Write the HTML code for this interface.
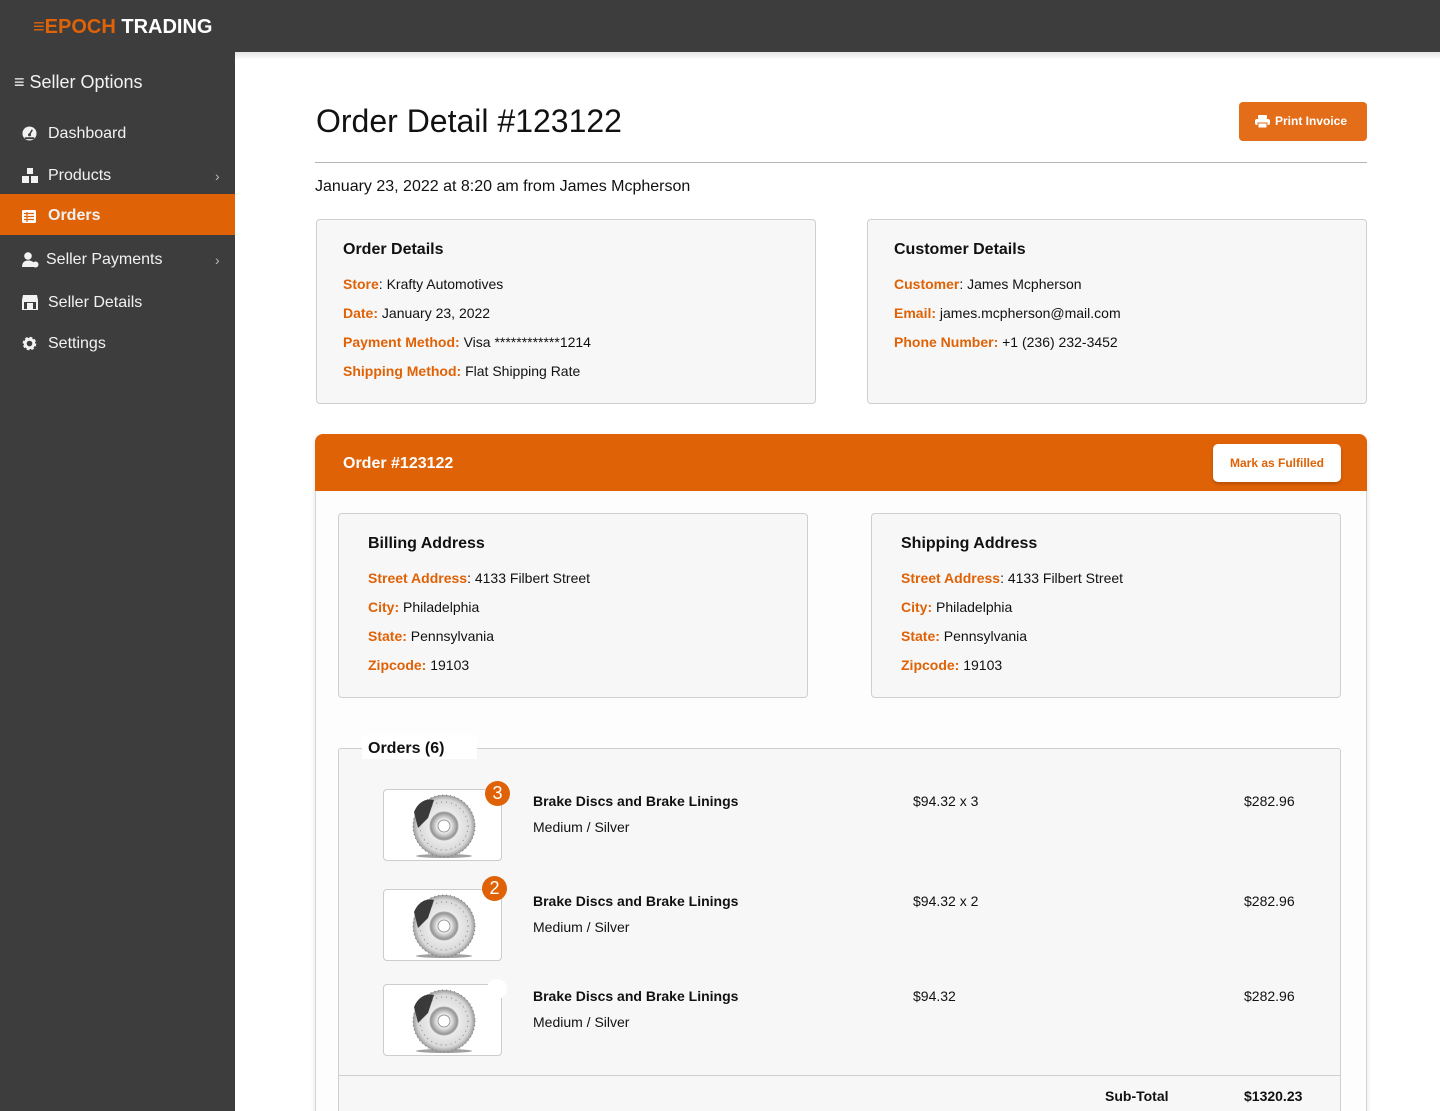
<!DOCTYPE html>
<html><head><meta charset="utf-8"><style>
*{box-sizing:border-box;margin:0;padding:0}
html,body{width:1440px;height:1111px;overflow:hidden}
body{font-family:"Liberation Sans",Arial,sans-serif;background:#fff;position:relative;color:#111}
.a{position:absolute}
.top{left:0;top:0;width:1440px;height:52px;background:#3d3d3d}
.side{left:0;top:52px;width:235px;height:1059px;background:#3d3d3d}
.shadow{left:235px;top:52px;width:1205px;height:8px;background:linear-gradient(#e4e4e4,#fff)}
.nav{left:0;width:235px;height:41px;color:#f2f2f2;font-size:16px;display:flex;align-items:center}
.nav svg{position:absolute;left:22px}
.nav span{position:absolute;left:48px}
.chev{position:absolute;left:215px;color:#bbb;font-size:14px;font-weight:normal}
.card{background:#f7f7f7;border:1px solid #cfcfcf;border-radius:4px}
h3{font-size:16px;font-weight:bold;position:absolute}
.ln{position:absolute;font-size:14px;white-space:nowrap}
.o{color:#e06206;font-weight:bold}
.img{width:119px;height:72px;background:#fff;border:1px solid #ccc;border-radius:4px}
.badge{width:25px;height:25px;border-radius:50%;background:#e06206;color:#fff;font-size:18px;text-align:center;line-height:25px}
</style></head><body>
<div class="a top"></div>
<div class="a" style="left:33px;top:16px;font-size:20px;font-weight:bold;letter-spacing:0;color:#fff"><span style="color:#e06206">≡EPOCH</span> TRADING</div>
<div class="a side"></div>
<div class="a shadow"></div>
<div class="a" style="left:14px;top:72px;font-size:18px;color:#f2f2f2">≡ Seller Options</div>

<div class="a nav" style="top:113px"><svg width="15" height="15" viewBox="0 0 16 16"><circle cx="8" cy="8" r="7.5" fill="#f2f2f2"/><path d="M8 9L11 4" stroke="#3d3d3d" stroke-width="1.6"/><circle cx="8" cy="9.5" r="1.6" fill="#3d3d3d"/><rect x="3" y="12" width="10" height="2" fill="#3d3d3d"/></svg><span>Dashboard</span></div>
<div class="a nav" style="top:155px"><svg width="16" height="15" viewBox="0 0 16 15"><rect x="5" y="0" width="6" height="6" fill="#f2f2f2"/><rect x="0" y="8" width="7" height="7" fill="#f2f2f2"/><rect x="9" y="8" width="7" height="7" fill="#f2f2f2"/></svg><span>Products</span><b class="chev">›</b></div>
<div class="a nav" style="top:194px;background:#e06206;font-weight:bold;padding-top:3px"><svg width="14" height="13" viewBox="0 0 14 13"><rect width="14" height="13" rx="1.5" fill="#fff"/><path d="M2 3.5h10M2 6.5h10M2 9.5h10M5 2v10" stroke="#e06206" stroke-width="1.2"/></svg><span>Orders</span></div>
<div class="a nav" style="top:239px"><svg width="17" height="16" viewBox="0 0 17 16"><circle cx="6" cy="4" r="3.8" fill="#f2f2f2"/><path d="M0 15c0-5 3-6.5 6-6.5s5 1 6 2.5v4z" fill="#f2f2f2"/><circle cx="13.5" cy="12.5" r="3" fill="#f2f2f2"/></svg><span style="left:46px">Seller Payments</span><b class="chev">›</b></div>
<div class="a nav" style="top:282px"><svg width="16" height="15" viewBox="0 0 16 15"><path d="M1 0h14l1 5H0z" fill="#f2f2f2"/><rect x="1" y="6" width="14" height="9" fill="none" stroke="#f2f2f2" stroke-width="2"/><rect x="5" y="8" width="6" height="7" fill="#f2f2f2"/></svg><span>Seller Details</span></div>
<div class="a nav" style="top:323px"><svg width="15" height="15" viewBox="0 0 16 16"><circle cx="8" cy="8" r="5.5" fill="none" stroke="#f2f2f2" stroke-width="3.5" stroke-dasharray="2.6 1.7"/><circle cx="8" cy="8" r="4.5" fill="none" stroke="#f2f2f2" stroke-width="3"/></svg><span>Settings</span></div>

<div class="a" style="left:316px;top:103px;font-size:32px">Order Detail #123122</div>
<div class="a" style="left:1239px;top:102px;width:128px;height:39px;background:#e36d19;border-radius:4px;color:#fff;font-size:12px;font-weight:bold;line-height:39px;padding-left:36px">Print Invoice</div>
<svg class="a" style="left:1255px;top:115px" width="15" height="13" viewBox="0 0 15 13"><rect x="3" y="0" width="9" height="4" rx="1" fill="#fff"/><rect x="0" y="4" width="15" height="6" rx="2" fill="#fff"/><rect x="3" y="8" width="9" height="5" fill="#fff" stroke="#e36d19"/></svg>
<div class="a" style="left:315px;top:162px;width:1052px;height:1px;background:#b5b5b5"></div>
<div class="a" style="left:315px;top:178px;font-size:16px">January 23, 2022 at 8:20 am from James Mcpherson</div>

<div class="a card" style="left:316px;top:219px;width:500px;height:185px"></div>
<h3 style="left:343px;top:241px">Order Details</h3>
<div class="ln" style="left:343px;top:276px"><span class="o">Store</span>: Krafty Automotives</div>
<div class="ln" style="left:343px;top:305px"><span class="o">Date:</span> January 23, 2022</div>
<div class="ln" style="left:343px;top:334px"><span class="o">Payment Method:</span> Visa ************1214</div>
<div class="ln" style="left:343px;top:363px"><span class="o">Shipping Method:</span> Flat Shipping Rate</div>

<div class="a card" style="left:867px;top:219px;width:500px;height:185px"></div>
<h3 style="left:894px;top:241px">Customer Details</h3>
<div class="ln" style="left:894px;top:276px"><span class="o">Customer</span>: James Mcpherson</div>
<div class="ln" style="left:894px;top:305px"><span class="o">Email:</span> james.mcpherson@mail.com</div>
<div class="ln" style="left:894px;top:334px"><span class="o">Phone Number:</span> +1 (236) 232-3452</div>

<div class="a" style="left:315px;top:434px;width:1052px;height:700px;border:1px solid #d5d5d5;border-radius:8px;background:#fdfdfd;box-shadow:0 2px 6px rgba(0,0,0,.12)"></div>
<div class="a" style="left:315px;top:434px;width:1052px;height:57px;background:#e06206;border-radius:8px 8px 0 0"></div>
<div class="a" style="left:343px;top:455px;color:#fff;font-size:16px;font-weight:bold">Order #123122</div>
<div class="a" style="left:1213px;top:444px;width:128px;height:38px;background:#fff;border-radius:5px;color:#e06206;font-size:12px;font-weight:bold;text-align:center;line-height:38px;box-shadow:0 2px 3px rgba(0,0,0,.2)">Mark as Fulfilled</div>

<div class="a card" style="left:338px;top:513px;width:470px;height:185px"></div>
<h3 style="left:368px;top:535px">Billing Address</h3>
<div class="ln" style="left:368px;top:570px"><span class="o">Street Address</span>: 4133 Filbert Street</div>
<div class="ln" style="left:368px;top:599px"><span class="o">City:</span> Philadelphia</div>
<div class="ln" style="left:368px;top:628px"><span class="o">State:</span> Pennsylvania</div>
<div class="ln" style="left:368px;top:657px"><span class="o">Zipcode:</span> 19103</div>

<div class="a card" style="left:871px;top:513px;width:470px;height:185px"></div>
<h3 style="left:901px;top:535px">Shipping Address</h3>
<div class="ln" style="left:901px;top:570px"><span class="o">Street Address</span>: 4133 Filbert Street</div>
<div class="ln" style="left:901px;top:599px"><span class="o">City:</span> Philadelphia</div>
<div class="ln" style="left:901px;top:628px"><span class="o">State:</span> Pennsylvania</div>
<div class="ln" style="left:901px;top:657px"><span class="o">Zipcode:</span> 19103</div>

<div class="a" style="left:338px;top:748px;width:1003px;height:380px;background:#f7f7f7;border:1px solid #cfcfcf;border-radius:3px"></div>
<div class="a" style="left:362px;top:735px;width:115px;height:24px;background:#fff"></div>
<h3 style="left:368px;top:740px">Orders (6)</h3>
<div class="a" style="left:339px;top:1075px;width:1001px;height:1px;background:#cfcfcf"></div>

<svg width="0" height="0" style="position:absolute"><defs>
<radialGradient id="dg"><stop offset="0.3" stop-color="#f4f4f4"/><stop offset="0.85" stop-color="#d8d8d8"/><stop offset="1" stop-color="#9a9a9a"/></radialGradient>
<radialGradient id="hg"><stop offset="0.4" stop-color="#fff"/><stop offset="1" stop-color="#888"/></radialGradient>
<g id="disc"><ellipse cx="60" cy="66" rx="28" ry="2" fill="#444" opacity=".5"/><circle cx="60" cy="36" r="31" fill="url(#dg)"/><circle cx="60" cy="36" r="31" fill="none" stroke="#777" stroke-width="1" stroke-dasharray="1 3"/><circle cx="60" cy="36" r="24" fill="none" stroke="#888" stroke-width="1" stroke-dasharray="1 4"/><path d="M30 22c4-10 12-14 20-12l-6 18-10 10z" fill="#3a3a3a"/><circle cx="60" cy="36" r="14" fill="url(#hg)" stroke="#aaa"/><circle cx="60" cy="36" r="6" fill="#fff" stroke="#999"/></g></defs></svg>

<div class="a img" style="left:383px;top:789px"><svg width="119" height="72"><use href="#disc"/></svg></div>
<div class="a badge" style="left:485px;top:781px">3</div>
<div class="ln" style="left:533px;top:793px;font-weight:bold">Brake Discs and Brake Linings</div>
<div class="ln" style="left:533px;top:819px">Medium / Silver</div>
<div class="ln" style="left:913px;top:793px">$94.32 x 3</div>
<div class="ln" style="left:1244px;top:793px">$282.96</div>

<div class="a img" style="left:383px;top:889px"><svg width="119" height="72"><use href="#disc"/></svg></div>
<div class="a badge" style="left:482px;top:876px">2</div>
<div class="ln" style="left:533px;top:893px;font-weight:bold">Brake Discs and Brake Linings</div>
<div class="ln" style="left:533px;top:919px">Medium / Silver</div>
<div class="ln" style="left:913px;top:893px">$94.32 x 2</div>
<div class="ln" style="left:1244px;top:893px">$282.96</div>

<div class="a img" style="left:383px;top:984px"><svg width="119" height="72"><use href="#disc"/></svg></div>
<div class="a badge" style="left:487px;top:979px;background:#fff;width:20px;height:20px"></div>
<div class="ln" style="left:533px;top:988px;font-weight:bold">Brake Discs and Brake Linings</div>
<div class="ln" style="left:533px;top:1014px">Medium / Silver</div>
<div class="ln" style="left:913px;top:988px">$94.32</div>
<div class="ln" style="left:1244px;top:988px">$282.96</div>

<div class="ln" style="left:1105px;top:1088px;font-weight:bold">Sub-Total</div>
<div class="ln" style="left:1244px;top:1088px;font-weight:bold">$1320.23</div>
</body></html>
